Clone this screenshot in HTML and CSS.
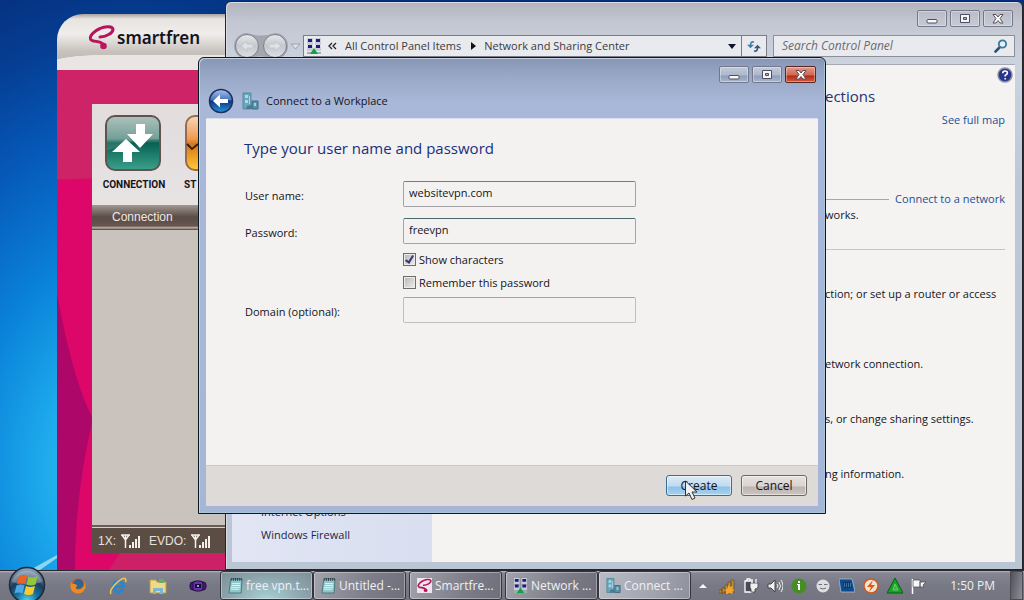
FILE: index.html
```html
<!DOCTYPE html>
<html lang="en">
<head>
<meta charset="utf-8">
<title>Connect to a Workplace</title>
<link rel="stylesheet" href="styles.css">
</head>
<body>
<svg class="defs" width="0" height="0" aria-hidden="true">
  <defs>
    <linearGradient id="orbBlue" x1="0" y1="0" x2="0" y2="1"><stop offset="0" stop-color="#a9c3ec"/><stop offset=".45" stop-color="#4674bd"/><stop offset=".5" stop-color="#0c3487"/><stop offset="1" stop-color="#2a96d8"/></linearGradient>
    <linearGradient id="orbGray" x1="0" y1="0" x2="0" y2="1"><stop offset="0" stop-color="#e8e8ec"/><stop offset=".5" stop-color="#c5c8cd"/><stop offset="1" stop-color="#dcdfe4"/></linearGradient>
    <radialGradient id="startOrb" cx=".5" cy=".95" r=".9"><stop offset="0" stop-color="#4ed6f2"/><stop offset=".35" stop-color="#17729f"/><stop offset=".65" stop-color="#1c3c5c"/><stop offset="1" stop-color="#8b9db1"/></radialGradient>
    <linearGradient id="greenTile" x1="0" y1="0" x2="0" y2="1"><stop offset="0" stop-color="#a4b9b4"/><stop offset=".42" stop-color="#5f948a"/><stop offset=".5" stop-color="#086052"/><stop offset="1" stop-color="#3aa28c"/></linearGradient>
    <linearGradient id="orangeTile" x1="0" y1="0" x2="0" y2="1"><stop offset="0" stop-color="#f6d8bd"/><stop offset=".42" stop-color="#ee9a50"/><stop offset=".52" stop-color="#d97712"/><stop offset="1" stop-color="#ffc93a"/></linearGradient>
    <symbol id="swirl" viewBox="0 0 27 25"><path d="M12 12C18 12 25 8 25 4.500 25 1 17 1 12 3.500 6 6 1.500 11 2.500 14 4 18 13 14.500 15.500 20" fill="none" stroke="#b8135c" stroke-width="3" stroke-linecap="round"/><circle cx="15.500" cy="21" r="3.300" fill="#c0125f"/></symbol>
    <symbol id="network" viewBox="0 0 16 18"><g fill="#c9cdd8"><path d="M1 1h6v7H1zM9 1h6v7H9zM1 9h6v5H1zM9 9h6v5H9z"/></g><g fill="#1f1c80"><path d="M2 2h4v3H2zM10 2h4v3h-4zM2 8h4v3H2zM10 8h4v3h-4z"/></g><path d="M1 15h14v2H1z" fill="#9ab5a4"/><path d="M8 11l4 6H4z" fill="#12a048"/></symbol>
    <symbol id="building" viewBox="0 0 17 18"><path d="M1 1h8v16H1z" fill="#6ba4bd" stroke="#5889a0"/><path d="M3 3h3v3H3zM3 8h3v3H3zM7 4h1v8H7z" fill="#a6dbe6"/><path d="M10 9h6v8h-6z" fill="#5791ab" stroke="#3c6a80"/><path d="M12 11h2v3h-2z" fill="#a2d0dd"/><path d="M5 14l5-1v4H4z" fill="#4c7990"/></symbol>
    <symbol id="notepad" viewBox="0 0 16 18"><path d="M3 2h12l-1 15H1z" fill="#8ec7ca" stroke="#4a7379"/><path d="M4 1v3M6 1v3M8 1v3M10 1v3M12 1v3M14 1v3" stroke="#26383d"/><path d="M4 7h9M4 9h9M3 11h10M3 13h9" stroke="#e5f4f3"/></symbol>
    <symbol id="signal" viewBox="0 0 20 14"><path d="M0 1h9M4.500 1v13M1 1l3.500 5L8 1" fill="none" stroke="#f3f0ec" stroke-width="1.500"/><path d="M8 11h2v3H8zM11 8h2v6h-2zM14 5h2v9h-2zM17 2h2v12h-2z" fill="#f3f0ec"/></symbol>
    <symbol id="min" viewBox="0 0 14 12"><rect x="2" y="6.500" width="10" height="3.500" rx="1" fill="#fafafa" stroke="#4c4f5f"/></symbol>
    <symbol id="max" viewBox="0 0 14 12"><path d="M2.500 1.500h9v8h-9z" fill="#f5f5f8" stroke="#4c4f5f"/><path d="M5.500 4.500h3v2h-3z" fill="#adb4c8" stroke="#4c4f5f"/></symbol>
    <symbol id="close" viewBox="0 0 14 12"><path d="M2 1.500h3L7 4l2-2.500h3L9 5.500 12 10H9L7 7.500 5 10H2l3-4.500z" fill="#fff" stroke="#5a4d59"/></symbol>
  </defs>
</svg>

<div class="screen">
<main class="desktop">
  <svg class="streak" viewBox="0 0 57 32" aria-hidden="true"><path d="M30 32L57 17v3L40 32z" fill="#a9e2f5" opacity=".8"/></svg>

  <section class="modem" aria-label="smartfren">
    <header class="modem-head">
      <svg class="modem-logo" aria-hidden="true"><use href="#swirl"/></svg>
      <span class="modem-brand">smartfren</span>
    </header>
    <div class="modem-skin">
      <svg class="modem-arcs" viewBox="0 0 400 502" preserveAspectRatio="none" aria-hidden="true">
        <path d="M0 0h400v502H0z" fill="#dc0769"/>
        <path d="M0 0h400v109H35L0 110z" fill="#ce2366"/>
        <path d="M0 225C12 290 25 330 36 350C24 400 18 450 18 502H0z" fill="#ad076a"/>
        <path d="M52 502L66 480H400v22z" fill="#ce2067"/>
      </svg>
      <div class="modem-panel">
        <div class="modem-tools">
          <button class="tool">
            <svg width="58" height="58" viewBox="0 0 58 58" aria-hidden="true"><rect x="2" y="2" width="54" height="54" rx="9" fill="url(#greenTile)" stroke="#60534e" stroke-width="2"/><path d="M3 36C14 34 25 24 55 25V11q0-8-8-8H11q-8 0-8 8z" fill="#fff" opacity=".12"/><path d="M32 10h9v10h8L36 34 23 20h9zM22 25L36 38h-8v10h-9V38H8z" fill="#fff"/></svg>
            <span>CONNECTION</span>
          </button>
          <button class="tool tool-next">
            <svg width="58" height="58" viewBox="0 0 58 58" aria-hidden="true"><rect x="2" y="2" width="54" height="54" rx="9" fill="url(#orangeTile)" stroke="#9a6a4c" stroke-width="2"/><path d="M3 30l5 5 6-5" fill="none" stroke="#342018" stroke-width="2"/></svg>
            <span>ST</span>
          </button>
        </div>
        <div class="modem-tab">Connection</div>
        <div class="modem-body"></div>
        <div class="modem-status">
          <span>1X:</span><svg class="bars" aria-hidden="true"><use href="#signal"/></svg>
          <span class="evdo">EVDO:</span><svg class="bars" aria-hidden="true"><use href="#signal"/></svg>
        </div>
      </div>
    </div>
  </section>

  <section class="window panel" aria-label="Network and Sharing Center">
    <div class="caption">
      <button class="cap-btn" aria-label="Minimize"><svg><use href="#min"/></svg></button>
      <button class="cap-btn" aria-label="Maximize"><svg><use href="#max"/></svg></button>
      <button class="cap-btn" aria-label="Close"><svg><use href="#close"/></svg></button>
    </div>
    <nav class="nav">
      <svg class="travel" width="70" height="28" viewBox="0 0 70 28" aria-hidden="true">
        <path d="M14 1Q28 6 42 1a13 13 0 0 1 0 26Q28 22 14 27a13 13 0 0 1 0-26z" fill="#a3a6af"/>
        <circle cx="14" cy="14" r="11.500" fill="url(#orbGray)" stroke="#7b7f8a"/><circle cx="42" cy="14" r="11.500" fill="url(#orbGray)" stroke="#7b7f8a"/>
        <path d="M8 14l6-5v3h6v4h-6v3zM48 14l-6-5v3h-6v4h6v3z" fill="#dfe1e5" stroke="#c3c6cc"/>
        <path d="M58 12h9l-4.500 5z" fill="#dde1ea" stroke="#9ba0ad"/>
      </svg>
      <div class="address">
        <svg class="net-icon" aria-hidden="true"><use href="#network"/></svg>
        <svg width="9" height="8" viewBox="0 0 9 8" aria-hidden="true"><path d="M4 1L1 4l3 3M8 1L5 4l3 3" fill="none" stroke="#222" stroke-width="1.300"/></svg>
        <span class="crumb">All Control Panel Items</span>
        <svg width="5" height="8" viewBox="0 0 5 8" aria-hidden="true"><path d="M0 0l5 4-5 4z" fill="#111"/></svg>
        <span class="crumb">Network and Sharing Center</span>
        <svg class="drop" width="8" height="5" viewBox="0 0 8 5" aria-hidden="true"><path d="M0 0h8L4 5z" fill="#111133"/></svg>
        <button class="refresh" aria-label="Refresh"><svg width="14" height="13" viewBox="0 0 16 14"><path d="M8 2C5 1 4 3 4 6" fill="none" stroke="#3b7fae" stroke-width="1.800"/><path d="M0 5h8L4 9z" fill="#3b7fae"/><path d="M8 12c3 1 4-1 4-4" fill="none" stroke="#33577f" stroke-width="1.800"/><path d="M8 9h8l-4-4z" fill="#33577f"/></svg></button>
      </div>
      <label class="search"><input type="search" placeholder="Search Control Panel" aria-label="Search Control Panel">
        <svg width="14" height="14" viewBox="0 0 14 14" aria-hidden="true"><path d="M1.500 12.500L6 8" stroke="#27557d" stroke-width="2.600" stroke-linecap="round"/><circle cx="8.500" cy="5" r="3.700" fill="#e4f0f5" stroke="#3c779c" stroke-width="1.800"/></svg></label>
    </nav>
    <div class="client">
      <aside class="side"><a href="#">Internet Options</a><a href="#">Windows Firewall</a></aside>
      <article class="info">
        <svg class="help" width="16" height="16" viewBox="0 0 16 16" aria-hidden="true"><circle cx="8" cy="8" r="7" fill="#27368b" stroke="#8a8da8" stroke-width="1.500"/><path d="M5.700 6.300Q5.700 4 8 4q2.400 0 2.400 2Q10.400 7.300 8.200 8.400V9.500M8.200 11v1.500" fill="none" stroke="#fff" stroke-width="1.600"/></svg>
        <h2>ections</h2>
        <a class="map" href="#">See full map</a>
        <div class="active-row"><hr><a href="#">Connect to a network</a></div>
        <p class="works">works.</p>
        <hr class="rule">
        <p class="t1">ction; or set up a router or access</p>
        <p class="t2">etwork connection.</p>
        <p class="t3">s, or change sharing settings.</p>
        <p class="t3">ng information.</p>
      </article>
    </div>
  </section>

  <section class="window dialog" role="dialog" aria-labelledby="dlg-title">
    <div class="caption">
      <button class="cap-btn" aria-label="Minimize"><svg><use href="#min"/></svg></button>
      <button class="cap-btn" aria-label="Maximize"><svg><use href="#max"/></svg></button>
      <button class="cap-btn cap-close" aria-label="Close"><svg><use href="#close"/></svg></button>
    </div>
    <div class="dlg-head">
      <button class="back" aria-label="Back"><svg width="26" height="26" viewBox="0 0 26 26"><circle cx="13" cy="13" r="11.500" fill="url(#orbBlue)" stroke="#1d2f60" stroke-width="1.500"/><path d="M5 13l7-6.500V11h8v4h-8v4.500z" fill="#fff"/></svg></button>
      <svg class="bld" aria-hidden="true"><use href="#building"/></svg>
      <span id="dlg-title">Connect to a Workplace</span>
    </div>
    <form class="dlg-body">
      <div class="fields">
        <h1>Type your user name and password</h1>
        <div class="row"><label for="user">User name:</label><input class="box" id="user" type="text" value="websitevpn.com"></div>
        <div class="row"><label for="pass">Password:</label><input class="box focus" id="pass" type="text" value="freevpn"></div>
        <div class="checks">
          <label><input type="checkbox" checked>Show characters</label>
          <label><input type="checkbox">Remember this password</label>
        </div>
        <div class="row"><label for="domain">Domain (optional):</label><input class="box pale" id="domain" type="text"></div>
      </div>
      <footer class="dlg-foot">
        <button type="button" class="btn btn-hot">Create<svg class="cursor" width="14" height="21" viewBox="0 0 14 21" aria-hidden="true"><path d="M1.500 1v15l3.500-3 3 6.500 3-1.500-3-6h5z" fill="#f1f1f1" stroke="#333"/></svg></button>
        <button type="button" class="btn">Cancel</button>
      </footer>
    </form>
  </section>
</main>

<footer class="taskbar">
  <button class="start" aria-label="Start"><svg width="38" height="38" viewBox="0 0 38 38"><circle cx="19" cy="19" r="17.500" fill="url(#startOrb)" stroke="#1d2a3a" stroke-width="1.500"/><path d="M4 16a15.500 15.500 0 0 1 30 0Q19 21 4 16z" fill="#fff" opacity=".28"/><path d="M11 10q4-2 8 0l-2 8q-4-2-8 0z" fill="#ee6024"/><path d="M20.500 10.500q4 2 9 0l-2 8q-4 2-9 0z" fill="#92c73c"/><path d="M8.500 19.500q4-2 8 0l-2 8q-4-2-8 0z" fill="#50a7e8"/><path d="M18 20q4 2 9 0l-2 8q-4 2-9 0z" fill="#fcc928"/></svg></button>
  <div class="quick">
    <svg viewBox="0 0 18 18" aria-label="Firefox"><circle cx="9" cy="9" r="7.500" fill="#d9581a"/><circle cx="9.500" cy="7" r="5" fill="#2c6696"/><path d="M2 4q0 3 3 3 3 0 3 2-2 2-1 3 4 2 8-3 1-3-1-6 4 4 2 9-3 5-8 4.500Q1 15 1.500 8z" fill="#ee8a25"/></svg>
    <svg viewBox="0 0 18 18" aria-label="Internet Explorer"><path d="M14 12q-2 3.500-5 3-4.500-.5-4.500-5.500T9 4.500q5 0 5.500 5H5" fill="none" stroke="#2487d6" stroke-width="3"/><path d="M2 17Q0 14 6 7.500 14-.5 16.500 2q.8.800 0 3" fill="none" stroke="#e8c84a" stroke-width="1.600"/></svg>
    <svg viewBox="0 0 18 18" aria-label="Explorer"><path d="M1 3h6l1 2h9v11H1z" fill="#efd985" stroke="#b79b50"/><path d="M10 2h5v4h-5z" fill="#67ad68"/><path d="M4 17v-6h10v6h-3v-3H7v3z" fill="#79b6d7"/></svg>
    <svg viewBox="0 0 18 18" aria-label="Media"><rect x="1" y="5" width="16" height="8" rx="3" fill="#4a1a7c" stroke="#220c41"/><rect x="4" y="4" width="10" height="10" rx="3" fill="#6b32a8" stroke="#220c41"/><path d="M6 7h6v4H6z" fill="#15102c"/><path d="M8 8h2v2H8z" fill="#56b6df"/></svg>
  </div>
  <div class="tasks">
    <button class="task glow"><svg><use href="#notepad"/></svg>free vpn.t...</button>
    <button class="task"><svg><use href="#notepad"/></svg>Untitled -...</button>
    <button class="task apart"><svg class="white"><use href="#swirl"/></svg>Smartfre...</button>
    <button class="task apart"><svg><use href="#network"/></svg>Network ...</button>
    <button class="task current"><svg><use href="#building"/></svg>Connect ...</button>
  </div>
  <div class="tray">
    <svg viewBox="0 0 16 16"><path d="M4 10l4-4 4 4z" fill="#f5f5f5"/></svg>
    <svg viewBox="0 0 16 16"><path d="M0 12h3v3H0zM3 10h3v5H3zM6 7h3v8H6zM9 4h3v11H9zM12 2h3v13h-3z" fill="#c48a33" stroke="#54452e" stroke-width=".6"/><path d="M10 6l1 3 3-1-1 3 3 1-3 1 1 3-4-1-3 2v-4l-2-1 3-1z" fill="#f7a526"/></svg>
    <svg viewBox="0 0 16 16"><path d="M2 3h7v11H2zM4 1h3v2H4z" fill="#4b4c55" stroke="#fff" stroke-width="1.300"/><path d="M7 5h8v4q-1 2-3 2v3H8v-3q-1-1-1-2zM9 2v3M13 2v3" fill="#eee" stroke="#3e3f48" stroke-width=".8"/><path d="M9 1v4M13 1v4" stroke="#fff" stroke-width="1.300"/></svg>
    <svg viewBox="0 0 16 16"><path d="M1 6h3l4-4v12l-4-4H1z" fill="#f2f2f2" stroke="#444"/><path d="M10 6q2 2 0 4M12 4q3 4 0 8M14 2q4 6 0 12" fill="none" stroke="#eee"/></svg>
    <svg viewBox="0 0 16 16"><circle cx="8" cy="8" r="7.500" fill="#468d24"/><path d="M7 3h2v2H7zM6 6h3v6H7V7H6z" fill="#fff"/></svg>
    <svg viewBox="0 0 16 16"><circle cx="8" cy="8" r="6.500" fill="#dedee2"/><path d="M3.500 6.500h3.500M9 6.500h3.500M5 10q3 2 6 0" stroke="#6c6d77" fill="none"/></svg>
    <svg viewBox="0 0 16 16"><path d="M0 1h13l3 13H2z" fill="#0b4c91" stroke="#b5cce0" stroke-width=".7"/><path d="M4 4h8l1 6H5z" fill="#14335f"/><path d="M5 6h7M5 8h7" stroke="#6cb4df" stroke-dasharray="1 1"/></svg>
    <svg viewBox="0 0 16 16"><circle cx="8" cy="8" r="7" fill="#f3e2cc" stroke="#cb5a20" stroke-width="1.500"/><path d="M10 2L4 9h4l-2 5 6-7H8z" fill="#e3551c"/></svg>
    <svg viewBox="0 0 16 16"><path d="M8 0l8 15H0z" fill="#15a524" stroke="#075e12"/><path d="M8 6l3 6H6z" fill="#81818c" stroke="#54d955"/></svg>
    <svg viewBox="0 0 16 16"><path d="M1.500 1v15" stroke="#fff" stroke-width="1.500"/><path d="M2 2h7v7H2zM9 4h6l-3 3 1 2H9z" fill="#f7f7f7" stroke="#44454e" stroke-width=".7"/></svg>
    <time>1:50 PM</time>
    <button class="peek" aria-label="Show desktop"></button>
  </div>
</footer>
</div>
</body>
</html>
```

FILE: styles.css
```css
*, *::before, *::after { box-sizing: border-box; }
body { margin: 0; font-family: "Open Sans", "Noto Sans", sans-serif; font-size: 11px; line-height: 16px; color: #15131a; }
button, input { font: inherit; color: inherit; margin: 0; padding: 0; }
button { border: 0; background: none; }
h1, h2, p, hr { margin: 0; font-weight: 400; }
a { color: #1c4f92; text-decoration: none; }
svg { display: block; flex: none; }
.defs { position: absolute; }

.screen { display: flex; flex-direction: column; height: 100vh; overflow: hidden; }
.desktop {
  position: relative; flex: 1; overflow: hidden;
  background: radial-gradient(ellipse 380px 520px at 130px 470px, #3cc4f5 0, #1eacec 22%, #0a83da 42%, #0658b8 66%, #053e93 84%, #052f7c 100%);
}
.streak { position: absolute; left: 0; bottom: 0; width: 57px; }

/* Modem application */
.modem { position: absolute; left: 57px; top: 14px; bottom: 0; width: 400px; display: flex; flex-direction: column; border-radius: 26px 0 0 0; overflow: hidden; }
.modem-head {
  display: flex; gap: 2px; padding: 10px 0 0 31px; height: 56px;
  background: radial-gradient(ellipse 60px 16px at 40px 57px, #e9e5e2 97%, transparent 100%), linear-gradient(90deg, transparent 40px, #e9e5e2 40px) 0 41px / 100% 15px no-repeat, linear-gradient(#a9a19b 0, #e7e4e1 5px, #efedeb 20px, #c7c1bc 38px, #b9b2ad 100%);
}
.modem-logo { width: 27px; height: 27px; }
.modem-brand { font-family: "Noto Sans", sans-serif; font-size: 17px; font-weight: 600; line-height: 28px; }
.modem-skin { position: relative; flex: 1; display: flex; padding: 34px 0 17px 35px; }
.modem-arcs { position: absolute; left: 0; top: 0; width: 100%; height: 100%; }
.modem-panel { position: relative; flex: 1; display: flex; flex-direction: column; background: #cac3bd; }
.modem-tools { display: flex; gap: 17px; padding: 10px 0 0 9px; height: 101px; background: linear-gradient(#e2dcdd, #e7e3e3); }
.tool { display: flex; flex-direction: column; align-items: center; gap: 5px; width: 66px; font-family: Roboto, "Liberation Sans", sans-serif; font-size: 10px; font-weight: 700; }
.tool:first-child svg { margin-right: 2px; }
.tool-next { align-items: flex-start; }
.modem-tab { padding-left: 20px; font-family: "Liberation Sans", sans-serif; font-size: 12px; line-height: 25px; color: #eee8e4; background: linear-gradient(#a29893, #5b4c45 12px, #65564f 21px, #c9c0ba 23px, #65564f 24px); }
.modem-body { flex: 1; border-bottom: 2px solid #6a5d55; }
.modem-status { display: flex; align-items: center; gap: 5px; padding-left: 6px; height: 26px; border-top: 1px solid #d6cfc9; font-family: "Liberation Sans", sans-serif; font-size: 12px; color: #e8e2dd; background: #5b4d44; }
.bars { width: 20px; height: 14px; }
.evdo { margin-left: 3px; }

/* Window frames */
.window { position: absolute; display: flex; flex-direction: column; border: 1px solid #27232d; border-radius: 6px 6px 0 0; }
.caption { display: flex; justify-content: flex-end; gap: 3px; }
.cap-btn { display: flex; align-items: center; justify-content: center; width: 30px; height: 17px; border: 1px solid #74788b; border-radius: 2px; box-shadow: inset 0 0 0 1px rgba(255, 255, 255, .35); }
.cap-btn svg { width: 14px; height: 12px; }

/* Control panel window */
.panel { left: 225px; right: 1px; top: 1px; bottom: 0; padding: 8px 7px 7px 6px; background: linear-gradient(#b1b2bc 0, #c3c7d2 20px, #ccd3df 62px, #bdc8d7 180px, #bbc6d4 100%); box-shadow: inset 1px 1px 0 #d9dce4; }
.panel .caption { padding-right: 2px; }
.nav { display: flex; align-items: center; gap: 6px; margin-top: 8px; height: 22px; }
.nav .travel { margin-left: 1px; margin-right: -6px; }
.address { flex: 1; display: flex; align-items: center; gap: 8px; height: 22px; padding-left: 2px; border: 1px solid #7a7d87; background: #e9eaed; color: #3a3a42; }
.net-icon { width: 16px; height: 18px; margin-right: -2px; }
.crumb + svg { margin-left: 2px; }
.address .drop { margin-left: auto; margin-right: -3px; }
.refresh { display: flex; align-items: center; justify-content: center; align-self: stretch; width: 25px; border-left: 1px solid #7a7d87; }
.search { display: flex; align-items: center; width: 242px; height: 22px; padding: 0 6px 0 8px; border: 1px solid #8e9099; background: #e9eaed; }
.search input { flex: 1; min-width: 0; border: 0; outline: 0; background: none; font-size: 12px; font-style: italic; }
.search input::placeholder { color: #6a6a72; opacity: 1; }
.client { flex: 1; display: flex; margin-top: 7px; min-height: 0; border-top: 1px solid #a6a9b4; background: #f4f3f2; }
.side { flex: none; display: flex; flex-direction: column; justify-content: flex-end; gap: 7px; width: 200px; padding: 0 29px 19px; background: linear-gradient(90deg, #e1e5f4, #d9dff0); }
.side a { color: #232549; }
.info { flex: 1; min-width: 0; display: flex; flex-direction: column; padding: 2px 10px 0 393px; white-space: nowrap; }
.help { align-self: flex-end; margin-right: -8px; }
.info h2 { margin-top: 3px; font-size: 15px; line-height: 20px; color: #1d3472; }
.map { align-self: flex-end; margin-top: 6px; }
.active-row { display: flex; align-items: center; gap: 6px; margin-top: 63px; }
.info hr { flex: 1; border: 0; border-top: 1px solid #a8a6a8; }
.info .rule { flex: none; margin-top: 26px; border-color: #c7c5c6; }
.t1 { margin-top: 36px; }
.t2 { margin-top: 54px; }
.t3 { margin-top: 39px; }

/* Dialog */
.dialog { left: 198px; top: 57px; width: 628px; height: 457px; padding: 8px 7px 7px; border-color: #0b1a22; background: linear-gradient(#8796b5 0, #9aa9c7 20px, #a9b8d8 45px, #a6b6d6 100%); box-shadow: inset 1px 1px 0 #c6d0e2, inset -1px -1px 0 #a8c5da; }
.dialog .caption { padding-right: 2px; }
.dialog .cap-btn { background: linear-gradient(#c2cad9, #aeb8cd 8px, #8f9db9 9px, #a9b7d1); }
.dialog .cap-close { width: 31px; border-color: #5c2620; background: linear-gradient(#e39a8b, #cf6751 8px, #b02d18 9px, #d35b3c); }
.dlg-head { display: flex; align-items: center; margin-top: 3px; padding-left: 2px; height: 30px; }
.back { display: flex; }
.bld { width: 17px; height: 18px; margin: 0 7px 0 8px; }
.dlg-body { flex: 1; display: flex; flex-direction: column; margin-top: 2px; border-top: 1px solid #d8deea; background: #f3f2f1; }
.fields { flex: 1; padding: 17px 38px 0; }
.fields h1 { margin-bottom: 21px; font-size: 15px; line-height: 24px; color: #17307e; }
.row { display: grid; grid-template-columns: 159px 233px; }
.row + .row { margin-top: 11px; }
.row label { padding: 7px 0 0 1px; }
.box { height: 26px; padding: 0 5px 4px; border: 1px solid #a3a1a4; border-top-color: #7d7a7e; border-radius: 2px; outline: 0; background: #f3f2f1; }
.focus { border-color: #95a9b6; border-top-color: #4b686d; }
.pale { border-color: #c1bebd; border-top-color: #a9a5a4; }
.checks { display: flex; flex-direction: column; margin: 4px 0 3px 159px; }
.checks label { display: flex; align-items: center; gap: 3px; height: 23px; }
.checks input { appearance: none; display: flex; width: 13px; height: 13px; border: 1px solid #6f6c70; background: linear-gradient(135deg, #b9b4b3, #efeeee); box-shadow: inset 0 0 0 1px #ecebea; }
.checks input:checked::after { content: ""; width: 5px; height: 9px; margin-left: 3px; border: solid #343b78; border-width: 0 2px 2px 0; transform: rotate(32deg); }
.dlg-foot { display: flex; justify-content: flex-end; gap: 9px; padding: 9px 11px 10px; border-top: 1px solid #cdc8c4; background: #dedad8; }
.btn { position: relative; width: 66px; height: 21px; border: 1px solid #6e6765; border-radius: 3px; background: linear-gradient(#e6e2e0, #d9d4d2 10px, #bcb4b0 11px, #cbc4c0); box-shadow: inset 0 0 0 1px rgba(255, 255, 255, .5); font-size: 12px; }
.btn-hot { border-color: #3b6c93; background: linear-gradient(#dcebf5, #bedbf0 10px, #8fc1e8 11px, #a5d3f0); }
.cursor { position: absolute; left: 17px; top: 4px; }

/* Taskbar */
.taskbar { display: flex; align-items: stretch; height: 30px; border-top: 1px solid #2b2831; background: linear-gradient(#b5b6bf 0, #858692 2px, #787986 50%, #73747f); position: relative; color: #eff0f4; font-size: 12px; }
.start { align-self: flex-end; width: 38px; height: 36px; margin: 0 0 -2px 8px; }
.quick { display: flex; align-items: center; gap: 22px; padding: 0 13px 0 23px; }
.quick svg { width: 18px; height: 18px; }
.tasks { display: flex; }
.task { display: flex; align-items: center; gap: 3px; width: 93px; padding-left: 7px; border: 1px solid #35343d; border-radius: 3px; box-shadow: inset 0 0 0 1px rgba(255, 255, 255, .35); white-space: nowrap; background: linear-gradient(110deg, #a2a3ac, #7c7d88 60%, #6e6f7a); }
.task svg { width: 15px; height: 17px; }
.task .white { height: 15px; background: #eee6ea; }
.glow { background: radial-gradient(ellipse at 50% 100%, #a9d0d6, #8ca3ab 60%, #7d8e98); }
.apart { margin-left: 3px; }
.current { background: linear-gradient(110deg, #b9bbc5, #a2a4af 60%, #8d8f9b); }
.tray { display: flex; align-items: center; gap: 8px; margin-left: auto; }
.tray svg { width: 16px; height: 16px; }
.tray time { margin: 0 7px 0 15px; }
.peek { align-self: stretch; width: 13px; border: 1px solid #4c4c55; background: linear-gradient(100deg, #50515b, #8d8e98); margin-right: 1px; }
```
